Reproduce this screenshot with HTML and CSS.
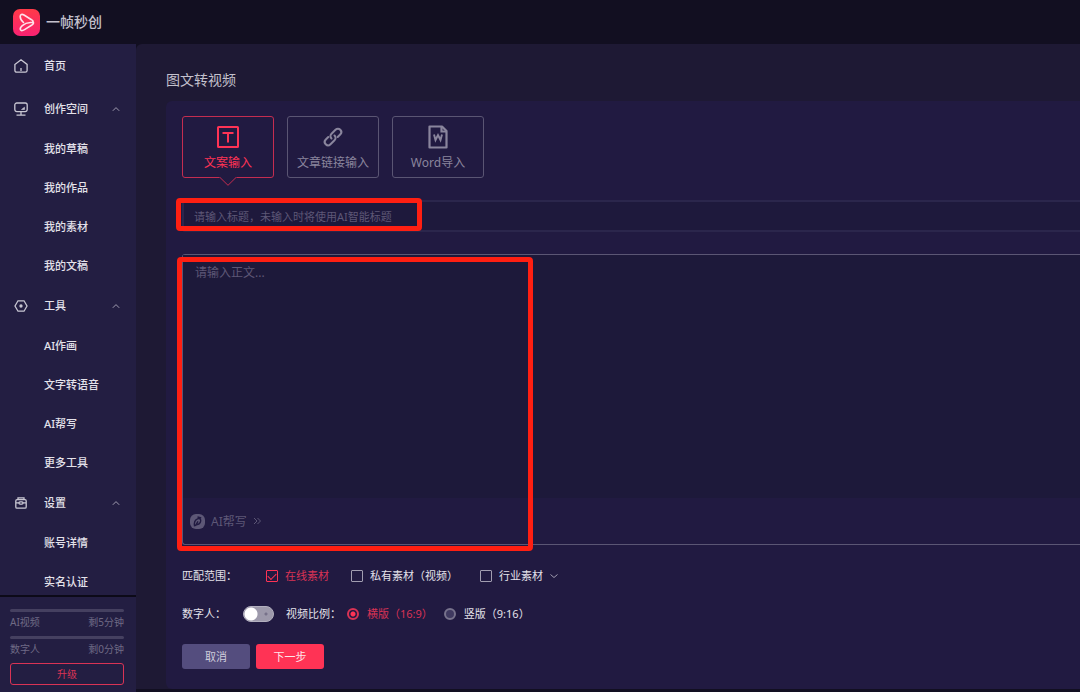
FILE: index.html
```html
<!DOCTYPE html>
<html lang="zh-CN">
<head>
  <meta charset="UTF-8" />
  <meta name="viewport" content="width=device-width, initial-scale=1.0"/>
  <title>图文转视频</title>
  <link rel="stylesheet" href="styles.css">
</head>
<body>

  <!-- Header -->
  <header class="header">
    <svg class="logo" viewBox="0 0 27 27">
      <defs>
        <linearGradient id="logoFill" x1="0" y1="0" x2="0" y2="1">
          <stop offset="0" stop-color="#ff3a48"/>
          <stop offset="1" stop-color="#f92272"/>
        </linearGradient>
      </defs>
      <rect width="27" height="27" rx="7" fill="url(#logoFill)"/>
      <path d="M10.500 13.500C8.500 11.800 7.200 9.500 7.200 7.500C7.200 5.400 9 4.900 11 6L18.500 10.700C21 12.400 20.800 13.300 17.500 13.500C14 13.700 11.500 14.700 9.300 16.600C7.500 18.200 6.800 19.700 7.500 20.900C8.200 22 9.800 21.600 11.500 20.600L18.500 16.300C20.800 14.800 21 13.600 19.800 12.200" fill="none" stroke="#ffe3ea" stroke-width="1.600" stroke-linejoin="round" stroke-linecap="round"/>
    </svg>
    <span class="brand">一帧秒创</span>
  </header>

  <div class="layout">
    <!-- Sidebar -->
    <aside class="sidebar">
      <nav class="nav">
        <a class="nav-item nav-home" href="#">
          <svg class="nav-icon" viewBox="0 0 14 14"><path d="M.9 5.400L7 .8l6.100 4.600v6a1.800 1.800 0 0 1-1.800 1.800H2.700a1.800 1.800 0 0 1-1.800-1.800zM7 9v3"/></svg>
          <span>首页</span>
        </a>

        <a class="nav-item" href="#">
          <svg class="nav-icon" viewBox="0 0 14 14"><path d="M2.800 1h8.400a2 2 0 0 1 2 2v4.600a2 2 0 0 1-2 2H2.800a2 2 0 0 1-2-2V3a2 2 0 0 1 2-2zM7 10v3M2.500 13.200h9"/><path d="M7.500 7.500h3V5.200z" fill="currentColor" stroke-width=".6"/></svg>
          <span>创作空间</span>
          <svg class="chevron" viewBox="0 0 8 8"><path d="M.8 5.800L4 2.600l3.200 3.200"/></svg>
        </a>
        <ul class="sub-nav">
          <li><a href="#">我的草稿</a></li>
          <li><a href="#">我的作品</a></li>
          <li><a href="#">我的素材</a></li>
          <li><a href="#">我的文稿</a></li>
        </ul>

        <a class="nav-item" href="#">
          <svg class="nav-icon" viewBox="0 0 14 14"><path d="M4 1.800h6L13 7l-3 5.200H4L1 7z"/><circle cx="7" cy="7" r="1" fill="currentColor"/></svg>
          <span>工具</span>
          <svg class="chevron" viewBox="0 0 8 8"><path d="M.8 5.800L4 2.600l3.200 3.200"/></svg>
        </a>
        <ul class="sub-nav">
          <li><a href="#">AI作画</a></li>
          <li><a href="#">文字转语音</a></li>
          <li><a href="#">AI帮写</a></li>
          <li><a href="#">更多工具</a></li>
        </ul>

        <a class="nav-item" href="#">
          <svg class="nav-icon" viewBox="0 0 14 14"><path d="M3 3.700h8a1.200 1.200 0 0 1 1.200 1.200V11a1.200 1.200 0 0 1-1.200 1.200H3A1.200 1.200 0 0 1 1.800 11V4.900A1.200 1.200 0 0 1 3 3.700zM4 3.700V1.900h6v1.800M1.800 6.800H5M9 6.800h3.200"/><rect x="5" y="5.900" width="4" height="2.200" rx="1"/></svg>
          <span>设置</span>
          <svg class="chevron" viewBox="0 0 8 8"><path d="M.8 5.800L4 2.600l3.200 3.200"/></svg>
        </a>
        <ul class="sub-nav">
          <li><a href="#">账号详情</a></li>
          <li><a href="#">实名认证</a></li>
        </ul>
      </nav>

      <div class="quota">
        <div class="quota-bar"></div>
        <div class="quota-row"><span>AI视频</span><span>剩5分钟</span></div>
        <div class="quota-bar"></div>
        <div class="quota-row"><span>数字人</span><span>剩0分钟</span></div>
        <button class="upgrade" type="button">升级</button>
      </div>
    </aside>

    <!-- Main Content -->
    <main class="main">
      <h1 class="title">图文转视频</h1>

      <form class="panel">
        <div class="tabs">
          <button class="tab active" type="button">
            <svg class="tab-icon" viewBox="0 0 24 24"><rect x="2" y="2" width="20" height="20" rx=".5" fill="none" stroke="currentColor" stroke-width="2"/><path d="M6.500 8h11M12 8v9.500" fill="none" stroke="currentColor" stroke-width="2"/></svg>
            <span>文案输入</span>
            <svg class="tab-arrow" viewBox="0 0 18 9"><path d="M0 0h18L9 8.500z" fill="#211a41"/><path d="M.5 0L9 8.300 17.500 0" fill="none" stroke="currentColor"/></svg>
          </button>
          <button class="tab" type="button">
            <svg class="tab-icon" viewBox="0 0 24 24"><g fill="none" stroke="currentColor" stroke-width="2" stroke-linecap="round"><path d="M10.500 13.500c-1.600-1.600-1.300-3.400 0-4.700l4-4c1.500-1.500 3.500-1.400 4.800-.1s1.400 3.300-.1 4.800l-2.500 2.500"/><path d="M13.500 10.500c1.600 1.600 1.300 3.400 0 4.700l-4 4c-1.500 1.500-3.500 1.400-4.800.1s-1.400-3.300.1-4.800L7.300 12"/></g></svg>
            <span>文章链接输入</span>
          </button>
          <button class="tab" type="button">
            <svg class="tab-icon" viewBox="0 0 24 24"><g fill="none" stroke="currentColor" stroke-width="2.200"><path d="M3.500 1.500h12.500l4.500 4.500v16.500h-17z" stroke-linejoin="round"/><path d="M15.500 2v4.500H20"/><path d="M8 9.500l1.500 5.500L12 10l2.500 5L16 9.500" stroke-width="1.900"/></g></svg>
            <span>Word导入</span>
          </button>
        </div>

        <div class="title-field">
          <input class="title-input" type="text" aria-label="标题" placeholder="请输入标题，未输入时将使用AI智能标题" />
          <div class="mark mark-title"></div>
        </div>

        <div class="editor">
          <textarea class="editor-text" aria-label="正文" placeholder="请输入正文..."></textarea>
          <div class="editor-foot">
            <button class="ai-write" type="button">
              <svg class="ai-icon" viewBox="0 0 14 14"><rect width="14" height="14" rx="5.500" fill="currentColor"/><path d="M4.300 11.500C3.600 8 4.500 5.600 7 4.500c1.800-.7 3.300.2 3 2-.3 2-1.800 3.400-4 3.500M7.500 6.800L5 11M7 2.800l3.500.8" fill="none" stroke="#211a41" stroke-width="1.300"/></svg>
              <span>AI帮写</span>
              <svg class="more" viewBox="0 0 8 8"><path d="M1 1l3 3-3 3M4.500 1l3 3-3 3"/></svg>
            </button>
          </div>
          <div class="mark mark-editor"></div>
        </div>

        <div class="row range-row">
          <span>匹配范围：</span>
          <div class="options">
            <label class="option"><input class="check" type="checkbox" checked /><span>在线素材</span></label>
            <label class="option"><input class="check" type="checkbox" /><span>私有素材（视频）</span></label>
            <label class="option"><input class="check" type="checkbox" /><span>行业素材</span><svg class="chevron" viewBox="0 0 8 8"><path d="M.5 2.500L4 5.500l3.500-3"/></svg></label>
          </div>
        </div>

        <div class="row ratio-row">
          <label for="avatar">数字人：</label>
          <input class="switch" type="checkbox" id="avatar" />
          <span>视频比例：</span>
          <div class="ratios">
            <label class="option"><input class="radio" type="radio" name="ratio" checked /><span>横版（16:9）</span></label>
            <label class="option"><input class="radio" type="radio" name="ratio" /><span>竖版（9:16）</span></label>
          </div>
        </div>

        <div class="actions">
          <button class="btn cancel" type="button">取消</button>
          <button class="btn next" type="button">下一步</button>
        </div>
      </form>
    </main>
  </div>

</body>
</html>
```

FILE: styles.css
```css
:root {
  --header: #120f21;
  --sidebar: #231e42;
  --main: #1e1934;
  --panel: #211a41;
  --field: #1e193c;
  --primary: #ff3355;
  --primary-soft: #d93355;
  --muted: #8a859d;
  --faint: #5d5776;
  --text: #e4e2ea;
  --mark: #ff1f12;
}

* {
  box-sizing: border-box;
}

body {
  margin: 0;
  min-height: 100vh;
  display: flex;
  flex-direction: column;
  background: var(--header);
  color: var(--text);
  font-family: "Noto Sans", "Noto Sans CJK SC", sans-serif;
  font-size: 11px;
  line-height: 16px;
  overflow-x: hidden;
}

button,
input,
textarea {
  margin: 0;
  font-family: inherit;
  color: inherit;
}

button {
  padding: 0;
  cursor: pointer;
}

a {
  color: inherit;
  text-decoration: none;
}

.header {
  display: flex;
  align-items: center;
  gap: 6px;
  height: 44px;
  padding-left: 13px;
}

.logo {
  width: 27px;
  height: 27px;
}

.brand {
  font-size: 14px;
  font-weight: 500;
  color: #c4c1cd;
}

.layout {
  flex: 1;
  display: flex;
}

/* Sidebar */
.sidebar {
  width: 136px;
  height: calc(100vh - 44px);
  flex-shrink: 0;
  display: flex;
  flex-direction: column;
  background: var(--sidebar);
  font-weight: 500;
}

.nav {
  flex: 1;
  min-height: 0;
  overflow: hidden;
}

.nav-item {
  display: flex;
  align-items: center;
  height: 42px;
  padding: 0 16px 0 14px;
}

.nav-home {
  height: 44px;
}

.nav-icon {
  width: 14px;
  height: 14px;
  margin-right: 16px;
  fill: none;
  stroke: currentColor;
  stroke-width: 1.3;
  color: #c9c7d3;
}

.chevron {
  width: 8px;
  height: 8px;
  margin-left: auto;
  fill: none;
  stroke: #a09cb0;
}

.sub-nav {
  display: flex;
  flex-direction: column;
  gap: 1px;
  margin: 0;
  padding: 0;
  list-style: none;
}

.sub-nav a {
  display: block;
  padding-left: 44px;
  line-height: 38px;
}

.quota {
  padding: 12px 12px 7px 10px;
  border-top: 2px solid #0c0a18;
  color: #6f6a85;
  font-size: 10px;
  font-weight: 400;
}

.quota-bar {
  height: 3px;
  border-radius: 2px;
  background: #454060;
}

.quota-row {
  display: flex;
  justify-content: space-between;
  margin-bottom: 4px;
  line-height: 20px;
}

.upgrade {
  width: 100%;
  height: 22px;
  padding-bottom: 2px;
  border: 1px solid var(--primary-soft);
  border-radius: 3px;
  background: none;
  color: var(--primary-soft);
  font-size: 10px;
}

/* Main Content */
.main {
  flex: 1;
  min-width: 0;
  padding: 25px 0 3px 30px;
  border-radius: 6px 0 0 0;
  background: linear-gradient(var(--header), var(--header)) bottom / 100% 3px no-repeat var(--main);
}

.title {
  margin: 0 0 10px;
  font-size: 14px;
  font-weight: 400;
  line-height: 22px;
  color: #c4c1cd;
}

.panel {
  padding: 15px 0 20px 16px;
  border-radius: 6px 0 0 6px;
  background: var(--panel);
}

.tabs {
  display: flex;
  gap: 13px;
  margin-bottom: 22px;
}

.tab {
  position: relative;
  display: flex;
  flex-direction: column;
  align-items: center;
  width: 92px;
  height: 62px;
  padding-top: 8px;
  border: 1px solid #5a5573;
  border-radius: 3px;
  background: none;
  color: var(--muted);
  font-size: 12px;
  line-height: 18px;
}

.tab.active {
  border-color: #c42d50;
  color: var(--primary);
}

.tab-icon {
  width: 24px;
  height: 24px;
  margin-bottom: 5px;
}

.tab-arrow {
  position: absolute;
  top: 60px;
  left: 36px;
  width: 18px;
  height: 9px;
  color: #c42d50;
}

.title-field,
.editor {
  position: relative;
}

.title-field {
  margin-bottom: 22px;
}

.title-input {
  display: block;
  width: 100%;
  height: 32px;
  padding: 0 10px;
  border: 2px solid #2b264c;
  border-right: 0;
  border-radius: 3px 0 0 3px;
  background: var(--field);
  font-size: 11px;
}

.title-input::placeholder,
.editor-text::placeholder {
  color: var(--faint);
  opacity: 1;
}

.editor {
  border: 1px solid #5b5674;
  border-right: 0;
  border-radius: 3px 0 0 3px;
}

.editor-text {
  display: block;
  width: 100%;
  height: 243px;
  padding: 9px 12px;
  border: 0;
  background: #1d193a;
  font-size: 12px;
  line-height: 18px;
  resize: none;
}

.editor-foot {
  display: flex;
  align-items: center;
  height: 46px;
  padding-left: 7px;
}

.ai-write {
  display: flex;
  align-items: center;
  gap: 6px;
  border: 0;
  background: none;
  color: var(--faint);
  font-size: 12px;
}

.ai-icon {
  width: 15px;
  height: 15px;
}

.more {
  width: 8px;
  height: 8px;
  fill: none;
  stroke: currentColor;
}

/* Highlight frames over the fields */
.mark {
  position: absolute;
  border: 5px solid var(--mark);
  border-radius: 4px;
  pointer-events: none;
}

.mark-title {
  top: -2px;
  left: -6px;
  width: 246px;
  height: 33px;
}

.mark-editor {
  top: 2px;
  left: -6px;
  width: 356px;
  height: 294px;
}

/* Options */
.row {
  display: flex;
  align-items: center;
  height: 24px;
}

.range-row {
  gap: 29px;
  margin: 19px 0 14px;
}

.ratio-row {
  gap: 6px;
  margin-bottom: 18px;
}

.options {
  display: flex;
  gap: 22px;
}

.ratios {
  display: flex;
  gap: 11px;
}

.option {
  display: flex;
  align-items: center;
  gap: 7px;
}

.ratios .option {
  gap: 8px;
}

.option:has(:checked) {
  color: var(--primary-soft);
}

.check,
.radio {
  appearance: none;
  width: 12px;
  height: 12px;
  border: 1px solid #a19db0;
}

.check {
  border-radius: 1px;
}

.check:checked {
  display: grid;
  place-items: center;
  border-color: var(--primary);
}

/* Tick drawn inside the checked box */
.check:checked::before {
  content: "";
  width: 7px;
  height: 4px;
  border: solid var(--primary);
  border-width: 0 0 1px 1px;
  transform: translateY(-1px) rotate(-45deg);
}

.radio {
  border-width: 2px;
  border-color: #77728c;
  border-radius: 50%;
  background: #3f3960;
}

.radio:checked {
  border-color: var(--primary-soft);
  background: radial-gradient(circle, var(--primary) 0 2px, var(--panel) 3px);
}

.switch {
  appearance: none;
  width: 31px;
  height: 16px;
  margin: 0 6px 0 11px;
  border: 1px solid #b3b0bf;
  border-radius: 8px;
  background: radial-gradient(circle at 7px 7px, #fff 0 6px, transparent 7px), radial-gradient(circle at 22px 7px, #77728a 0 1px, transparent 2px), #9d99ab;
}

.actions {
  display: flex;
  gap: 6px;
}

.btn {
  width: 68px;
  height: 25px;
  padding-bottom: 2px;
  border: 0;
  border-radius: 3px;
  font-size: 11px;
}

.cancel {
  background: #544d7e;
  color: #d0cddc;
}

.next {
  background: var(--primary);
  color: #ffe6ea;
}
```
